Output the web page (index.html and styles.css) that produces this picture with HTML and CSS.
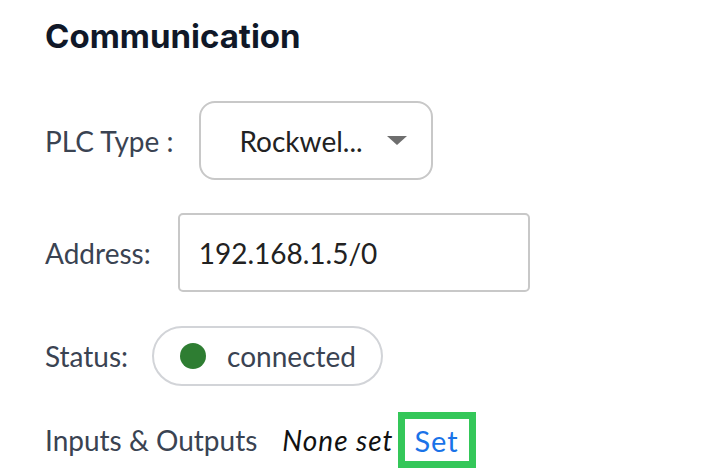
FILE: index.html
```html
<!DOCTYPE html>
<html>
<head>
<meta charset="utf-8">
<link rel="stylesheet" href="styles.css">
</head>
<body>
<div class="panel">
  <h2 class="title">Communication</h2>
  <div class="row row-plc">
    <span class="label">PLC Type :</span>
    <div class="select">
      <span class="select-value">Rockwel...</span>
      <span class="caret"></span>
    </div>
  </div>
  <div class="row row-addr">
    <span class="label">Address:</span>
    <div class="input">192.168.1.5/0</div>
  </div>
  <div class="row row-status">
    <span class="label">Status:</span>
    <div class="pill">
      <span class="dot"></span>
      <span class="pill-text">connected</span>
    </div>
  </div>
  <div class="row row-io">
    <span class="label">Inputs &amp; Outputs</span>
    <span class="none">None set</span>
    <span class="set-box"><a class="set">Set</a></span>
  </div>
</div>
</body>
</html>
```
FILE: styles.css
```css
html, body {
  margin: 0;
  padding: 0;
  background: #ffffff;
}
.panel {
  padding: 14px 0 0 45px;
  font-family: Lato, "Noto Sans", sans-serif;
  color: #3a4352;
}
.title {
  margin: 0;
  font-family: Inter, "Noto Sans", sans-serif;
  font-weight: 700;
  font-size: 33px;
  line-height: 44px;
  color: #101828;
}
.row {
  display: flex;
  align-items: center;
}
.label {
  font-size: 28px;
  color: #3a4352;
}
.row-plc {
  margin-top: 43px;
  gap: 26px;
}
.select {
  box-sizing: border-box;
  width: 234px;
  height: 79px;
  border: 2px solid #c8c8c8;
  border-radius: 16px;
  display: flex;
  align-items: center;
  padding-left: 38px;
  gap: 24px;
}
.select-value {
  font-size: 28px;
  color: #222;
}
.caret {
  width: 0;
  height: 0;
  border-left: 10px solid transparent;
  border-right: 10px solid transparent;
  border-top: 9px solid #6e6e6e;
}
.row-addr {
  margin-top: 33px;
  gap: 27px;
}
.input {
  box-sizing: border-box;
  width: 352px;
  height: 79px;
  border: 2px solid #c8c8c8;
  border-radius: 5px;
  display: flex;
  align-items: center;
  padding-left: 19px;
  font-size: 28px;
  color: #222;
}
.row-status {
  margin-top: 34px;
  gap: 24px;
}
.pill {
  box-sizing: border-box;
  width: 231px;
  height: 60px;
  border: 2px solid #d2d4d8;
  border-radius: 30px;
  display: flex;
  align-items: center;
  padding-left: 26px;
  gap: 21px;
}
.dot {
  width: 26px;
  height: 26px;
  border-radius: 50%;
  background: #2e7d32;
}
.pill-text {
  font-size: 28px;
  color: #3a4352;
}
.row-io {
  margin-top: 26px;
}
.none {
  margin-left: 25px;
  font-style: italic;
  font-size: 28px;
  letter-spacing: 1px;
  color: #111;
}
.set-box {
  box-sizing: border-box;
  margin-left: 4px;
  height: 56px;
  width: 78px;
  border: 7px solid #34c759;
  display: flex;
  align-items: center;
  justify-content: center;
}
.set {
  font-size: 29px;
  letter-spacing: 1px;
  color: #1a73e8;
}
```
